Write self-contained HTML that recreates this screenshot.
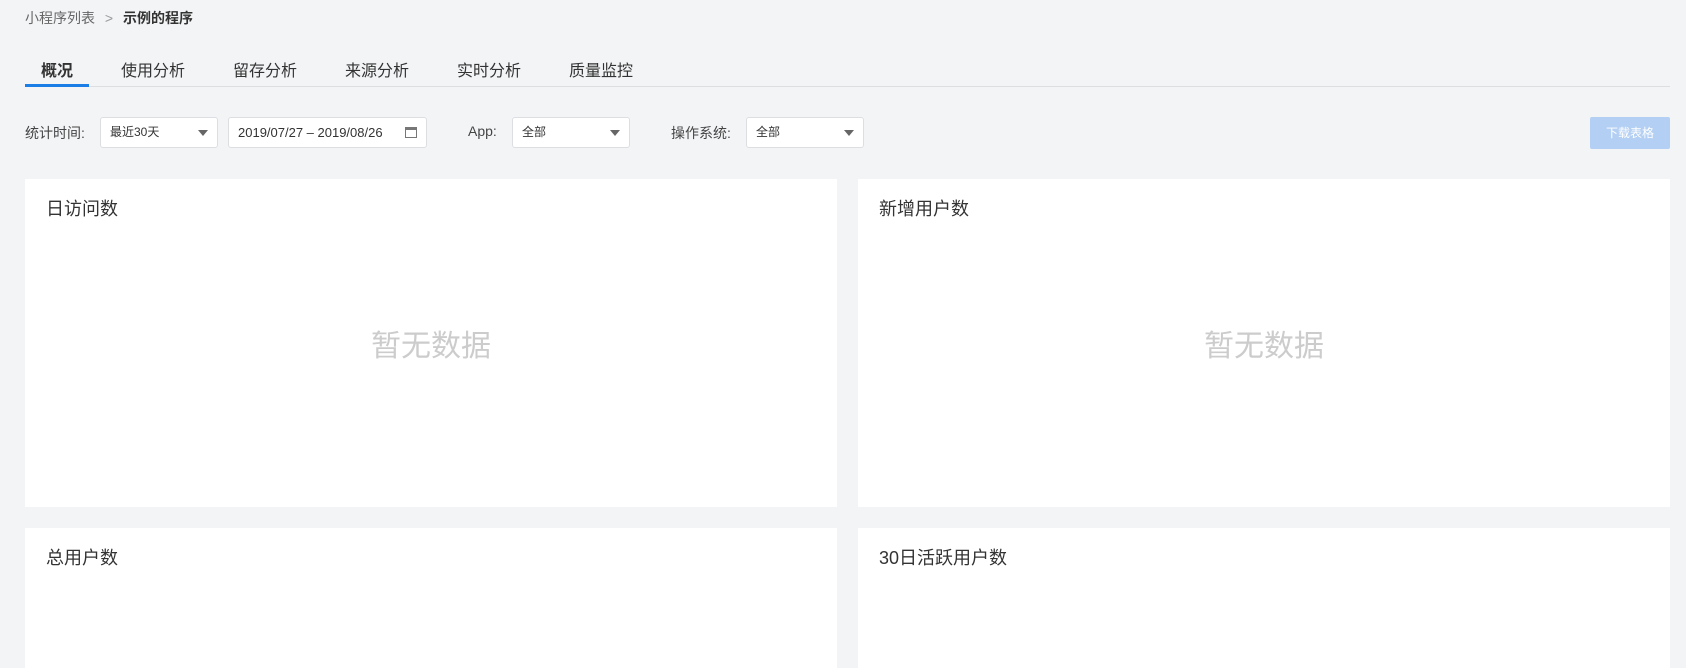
<!DOCTYPE html>
<html><head><meta charset="utf-8"><style>
*{margin:0;padding:0;box-sizing:border-box}
body{width:1686px;height:665px;background:#f3f4f6;font-family:"Liberation Sans","Noto Sans CJK SC",sans-serif;color:#333;position:relative;overflow:hidden}
.abs{position:absolute}
.bc{left:25px;top:8px;font-size:14px;color:#666}
.bc b{color:#333}
.tabs{left:25px;top:0;width:1645px;height:87px;border-bottom:1px solid #dcdee2}
.tab{position:absolute;top:57px;font-size:16px;color:#333}
.ul{left:25px;top:84px;width:64px;height:3px;background:#1a7ee6}
.lbl{font-size:14px;color:#444;top:123px}
.sel{top:117px;height:31px;background:#fff;border:1px solid #dcdee2;border-radius:3px;font-size:12px;color:#333;padding:0 9px;line-height:29px}
.sel .ar{position:absolute;right:9px;top:12px;width:0;height:0;border-left:5px solid transparent;border-right:5px solid transparent;border-top:6px solid #666}
.btn{left:1590px;top:117px;width:80px;height:32px;background:#b3cff3;color:#fff;font-size:12px;text-align:center;line-height:32px;border-radius:2px}
.card{background:#fff}
.ct{position:absolute;left:21px;top:16px;font-size:18px;color:#333}
.nd{position:absolute;left:0;right:0;top:142px;text-align:center;font-size:30px;color:#ccc}
</style></head><body>
<div class="abs bc">小程序列表 <span style="color:#999;margin:0 6px">&gt;</span> <b>示例的程序</b></div>
<div class="abs tabs"></div>
<div class="abs tab" style="left:41px;font-weight:bold">概况</div>
<div class="abs tab" style="left:121px">使用分析</div>
<div class="abs tab" style="left:233px">留存分析</div>
<div class="abs tab" style="left:345px">来源分析</div>
<div class="abs tab" style="left:457px">实时分析</div>
<div class="abs tab" style="left:569px">质量监控</div>
<div class="abs ul"></div>
<div class="abs lbl" style="left:25px">统计时间:</div>
<div class="abs sel" style="left:100px;width:118px">最近30天<span class="ar"></span></div>
<div class="abs sel" style="left:228px;width:199px;font-size:13px">2019/07/27 – 2019/08/26<span style="position:absolute;right:9px;top:9px;width:12px;height:11px;border:1px solid #777;border-top-width:3px"></span></div>
<div class="abs lbl" style="left:468px">App:</div>
<div class="abs sel" style="left:512px;width:118px">全部<span class="ar"></span></div>
<div class="abs lbl" style="left:671px">操作系统:</div>
<div class="abs sel" style="left:746px;width:118px">全部<span class="ar"></span></div>
<div class="abs btn">下载表格</div>
<div class="abs card" style="left:25px;top:179px;width:812px;height:328px"><div class="ct">日访问数</div><div class="nd">暂无数据</div></div>
<div class="abs card" style="left:858px;top:179px;width:812px;height:328px"><div class="ct">新增用户数</div><div class="nd">暂无数据</div></div>
<div class="abs card" style="left:25px;top:528px;width:812px;height:140px"><div class="ct">总用户数</div></div>
<div class="abs card" style="left:858px;top:528px;width:812px;height:140px"><div class="ct">30日活跃用户数</div></div>
</body></html>
